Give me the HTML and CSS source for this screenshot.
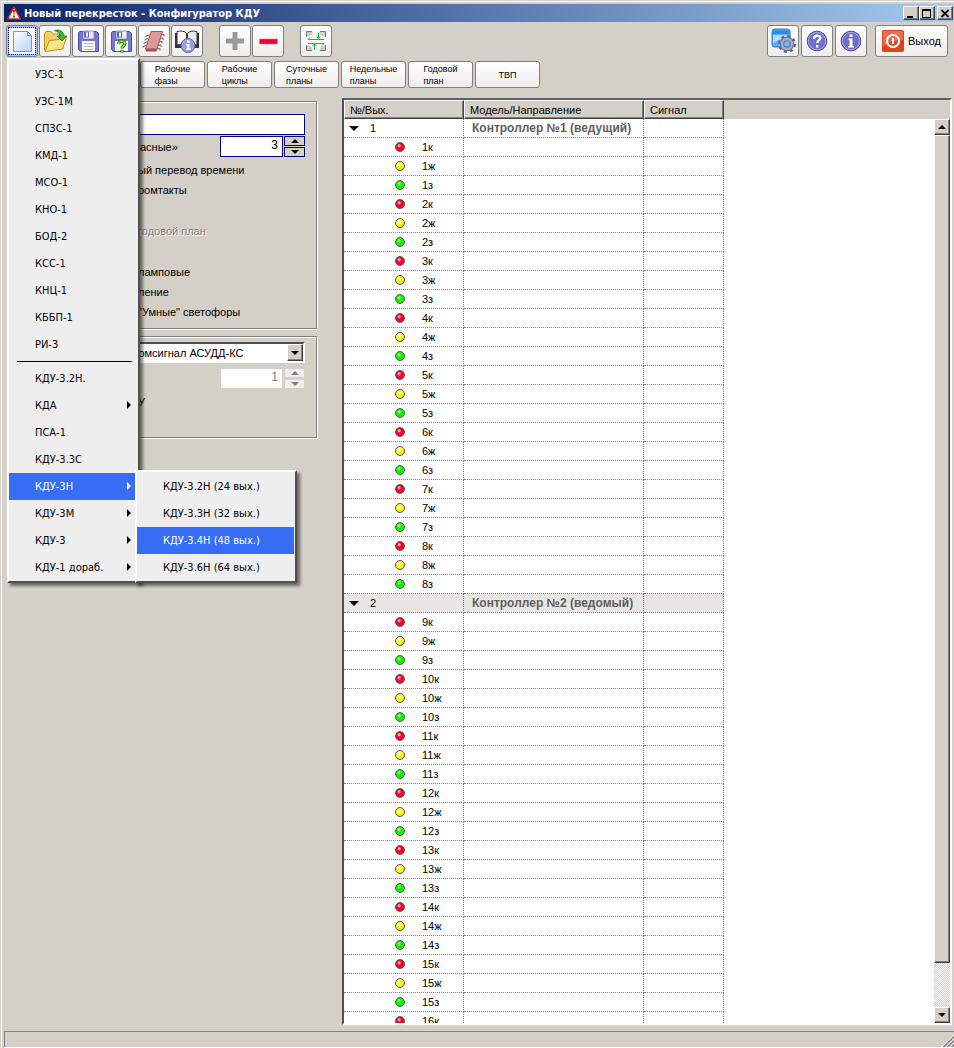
FILE: index.html
```html
<!DOCTYPE html>
<html lang="ru">
<head>
    <meta charset="UTF-8">
    <meta name="viewport" content="width=device-width, initial-scale=1.0">
    <title>Новый перекресток - Конфигуратор КДУ</title>
    <link rel="stylesheet" href="styles.css">
</head>
<body>
<div class="window">

    <header class="titlebar">
        <svg class="app-icon" width="14" height="14" viewBox="0 0 14 14">
            <path d="M7 1L13.300 13H.7z" fill="#fff" stroke="#e02020" stroke-width="1.500" stroke-linejoin="round"/>
            <rect x="6" y="4" width="2" height="2.500" fill="#e02020"/>
            <rect x="6" y="7" width="2" height="2" fill="#d8b000"/>
            <rect x="6" y="9.500" width="2" height="2" fill="#109020"/>
        </svg>
        <h1>Новый перекресток - Конфигуратор КДУ</h1>
        <div class="caption-buttons">
            <button class="caption" aria-label="Свернуть"><svg width="10" height="9"><path d="M1 7h6v2H1z"/></svg></button>
            <button class="caption" aria-label="Развернуть"><svg width="10" height="9"><path d="M0 0h9v9H0zM1 2v6h7V2z" fill-rule="evenodd"/></svg></button>
            <button class="caption close" aria-label="Закрыть"><svg width="10" height="9"><path d="M1.500 1l7 7M8.500 1l-7 7" stroke="#000" stroke-width="1.800"/></svg></button>
        </div>
    </header>

    <div class="toolbar">
        <div class="tools">
            <div class="dropdown">
                <button class="tool active" aria-label="Новый">
                    <svg width="26" height="26" viewBox="0 0 26 26">
                        <defs><linearGradient id="page" x2="1" y2="1"><stop offset="0" stop-color="#fff"/><stop offset="1" stop-color="#b4d4fa"/></linearGradient></defs>
                        <path d="M4.500 3.500h14l4 4v16h-18z" fill="url(#page)" stroke="#7c93c4"/>
                        <path d="M18.500 3.500v4h4z" fill="#eef5ff" stroke="#7c93c4"/>
                    </svg>
                </button>
                <ul class="menu">
                    <li>УЗС-1</li>
                    <li>УЗС-1М</li>
                    <li>СПЗС-1</li>
                    <li>КМД-1</li>
                    <li>МСО-1</li>
                    <li>КНО-1</li>
                    <li>БОД-2</li>
                    <li>КСС-1</li>
                    <li>КНЦ-1</li>
                    <li>КББП-1</li>
                    <li>РИ-3</li>
                    <li class="separator"></li>
                    <li>КДУ-3.2Н.</li>
                    <li class="parent">КДА</li>
                    <li>ПСА-1</li>
                    <li>КДУ-3.3С</li>
                    <li class="parent selected">КДУ-3Н
                        <ul class="menu submenu">
                            <li>КДУ-3.2Н (24 вых.)</li>
                            <li>КДУ-3.3Н (32 вых.)</li>
                            <li class="selected">КДУ-3.4Н (48 вых.)</li>
                            <li>КДУ-3.6Н (64 вых.)</li>
                        </ul>
                    </li>
                    <li class="parent">КДУ-3М</li>
                    <li class="parent">КДУ-3</li>
                    <li class="parent">КДУ-1 дораб.</li>
                </ul>
            </div>
            <button class="tool" aria-label="Открыть">
                <svg width="26" height="26" viewBox="0 0 26 26">
                    <path d="M2.500 22V5.500l1.500-2h5l2 2.500h6.500V11" fill="#f2cf62" stroke="#b98a1c"/>
                    <path d="M3 23.500l4.500-11 9-1 1.500-2h6.500l-4 11.500z" fill="#ffe387" stroke="#b98a1c" stroke-linejoin="round"/>
                    <path d="M12.500 2.500c5-1.500 9 .5 9.500 5.500h2.800L20 13l-4.800-5h3c-.5-3-2.500-4.500-5.700-5.500z" fill="#3fb53a" stroke="#187418" stroke-width=".8"/>
                </svg>
            </button>
            <button class="tool" aria-label="Сохранить">
                <svg width="26" height="26" viewBox="0 0 26 26">
                    <path d="M4.500 3.500h17l2 2v18h-18l-2-2v-17z" fill="#7779cf" stroke="#4d4e9c"/>
                    <path d="M8 3h11v8H8z" fill="#ececf6" stroke="#5b5ca8" stroke-width=".6"/>
                    <path d="M9 3.500h5v6H9z" fill="#6264b8"/><path d="M11 4.500h2v4h-2z" fill="#fff"/>
                    <path d="M7 13h13v10H7z" fill="#fafafa"/>
                    <path d="M9 15.500h9M9 18.500h9M9 21.500h9" stroke="#b9b9c4"/>
                </svg>
            </button>
            <button class="tool" aria-label="Сохранить как">
                <svg width="26" height="26" viewBox="0 0 26 26">
                    <path d="M4.500 3.500h17l2 2v18h-18l-2-2v-17z" fill="#7779cf" stroke="#4d4e9c"/>
                    <path d="M8 3h11v8H8z" fill="#ececf6" stroke="#5b5ca8" stroke-width=".6"/>
                    <path d="M9 3.500h5v6H9z" fill="#6264b8"/><path d="M11 4.500h2v4h-2z" fill="#fff"/>
                    <path d="M7 13h13v10H7z" fill="#fafafa"/>
                    <path d="M10.500 16c.5-4 6.500-3.500 6.300 0-.1 2-2.800 2.200-2.800 4.500M14 22v2.500" fill="none" stroke="#1d6b10" stroke-width="3.200"/>
                    <path d="M10.500 16c.5-4 6.500-3.500 6.300 0-.1 2-2.800 2.200-2.800 4M14 22.500v1.500" fill="none" stroke="#7be03c" stroke-width="1.800"/>
                </svg>
            </button>
            <button class="tool" aria-label="Прошивка">
                <svg width="26" height="26" viewBox="0 0 26 26">
                    <path d="M8 7l-3 1v1M7 10.500l-3 1v1M6 14l-3 1v1M5 17.500l-3 1v1M20 7l3-.5v2M19 10.500l3-.5v2M18 14l3-.5v2M17 17.500l3-.5v2M16 21l3-.5v2" fill="none" stroke="#666"/>
                    <path d="M10 3.500h11.500L16 21H4.500z" fill="#dd9898" stroke="#a55555"/>
                    <path d="M4.500 21H16l-.5 2.500H5z" fill="#aa4c4c"/>
                </svg>
            </button>
            <button class="tool" aria-label="Справочник">
                <svg width="26" height="26" viewBox="0 0 26 26">
                    <path d="M1 5h24v15H1z" fill="#30343c"/>
                    <path d="M3 3.500q7-1.500 9.500 2v13q-3-3-9.500-1.500z" fill="#fff" stroke="#333"/>
                    <path d="M23 3.500q-7-1.500-9.500 2v13q3-3 9.500-1.500z" fill="#e8e8e8" stroke="#333"/>
                    <circle cx="14" cy="17.500" r="7" fill="#9c9fe0" stroke="#5f62b0"/>
                    <path d="M13 12.500h2.500v2H13zM12 16h3.500v4.500H17V22h-5v-1.500h1.300v-3H12z" fill="#fff"/>
                </svg>
            </button>
        </div>
        <div class="tools">
            <button class="tool" aria-label="Добавить"><svg width="26" height="26" viewBox="0 0 26 26"><path d="M10.500 4h5v6.500H22v5h-6.500V22h-5v-6.500H4v-5h6.500z" fill="#9a9a9a"/></svg></button>
            <button class="tool" aria-label="Удалить"><svg width="26" height="26" viewBox="0 0 26 26"><path d="M4.500 11h18v5h-18z" fill="#f50030" stroke="#ff7088" stroke-width=".5"/></svg></button>
        </div>
        <div class="tools">
            <button class="tool" aria-label="Перекресток">
                <svg width="26" height="26" viewBox="0 0 26 26">
                    <path d="M3.500 3.500h6q0 5-6 5zM22.500 3.500h-6q0 5 6 5zM3.500 22.500h6q0-5-6-5zM22.500 22.500h-6q0-5 6-5z" fill="#ccc"/>
                    <path d="M9 3.500H3.500V9M17 3.500h5.500V9M9 22.500H3.500V17M17 22.500h5.500V17" fill="none" stroke="#777"/>
                    <path d="M5 11.500h16M7 9.500l-2 2M5 15.500h16M19 17.500l2-2M15.500 4.500v6M13.500 8.500l2 2 2-2M11.500 22v-6M9.500 18l2-2 2 2" fill="none" stroke="#10c040"/>
                </svg>
            </button>
        </div>
        <div class="tools right">
            <button class="tool" aria-label="Настройки">
                <svg width="26" height="26" viewBox="0 0 26 26">
                    <rect x="2" y="1" width="18" height="18" rx="2.500" fill="#58aefa" stroke="#237bd5"/>
                    <path d="M2.500 2.500h17V6h-17z" fill="#2c88ee"/><path d="M3 7h16v3q-8 0-16 5z" fill="#b2dcff"/>
                    <circle cx="17" cy="16" r="7.500" fill="none" stroke="#5c6484" stroke-width="3" stroke-dasharray="2.950"/>
                    <circle cx="17" cy="16" r="5" fill="none" stroke="#6a7294" stroke-width="4.500"/>
                    <circle cx="17" cy="16" r="5" fill="none" stroke="#a3accb" stroke-width="2.500"/>
                    <circle cx="17" cy="16" r="2.500" fill="#78b9f4"/>
                </svg>
            </button>
            <button class="tool" aria-label="Помощь">
                <svg width="26" height="26" viewBox="0 0 26 26">
                    <circle cx="13" cy="13" r="9.800" fill="#6f70c8" stroke="#44458f"/>
                    <circle cx="13" cy="13" r="8.700" fill="none" stroke="#a9aaea"/>
                    <path d="M10 11c0-4.500 6.500-4 6.300-.8-.1 2.200-3.100 2.200-3.100 4.800M13.200 17v2.500" fill="none" stroke="#fff" stroke-width="2.400"/>
                </svg>
            </button>
            <button class="tool" aria-label="О программе">
                <svg width="26" height="26" viewBox="0 0 26 26">
                    <circle cx="13" cy="13" r="9.800" fill="#6f70c8" stroke="#44458f"/>
                    <circle cx="13" cy="13" r="8.700" fill="none" stroke="#a9aaea"/>
                    <path d="M11.500 6.500h3V9h-3zM10.500 10.500h4V18H16v1.500h-6V18h1.500v-6h-1z" fill="#fff"/>
                </svg>
            </button>
            <button class="tool exit">
                <svg width="22" height="22" viewBox="0 0 22 22">
                    <rect width="22" height="22" rx="1.500" fill="#dc4422"/>
                    <path d="M1 1h20v9Q10 10 1 16z" fill="#e8704e"/>
                    <circle cx="11" cy="11" r="6" fill="none" stroke="#fff" stroke-width="2"/>
                    <path d="M10 8h2v6h-2z" fill="#fff"/>
                </svg>
                <span>Выход</span>
            </button>
        </div>
    </div>

    <nav class="tabs">
        <button class="tab"><span>Рабочие<br>фазы</span></button>
        <button class="tab"><span>Рабочие<br>циклы</span></button>
        <button class="tab"><span>Суточные<br>планы</span></button>
        <button class="tab"><span>Недельные<br>планы</span></button>
        <button class="tab"><span>Годовой<br>план</span></button>
        <button class="tab"><span>ТВП</span></button>
    </nav>

    <main class="content">
        <div class="settings">
            <fieldset class="group">
                <input class="name" type="text" aria-label="Название">
                <div class="field-row">
                    <label for="red-time">асные»</label>
                    <input class="number" id="red-time" type="text" value="3">
                    <div class="spinner">
                        <button aria-label="Больше"><svg width="8" height="4"><path d="M4 0l4 4H0z"/></svg></button>
                        <button aria-label="Меньше"><svg width="8" height="4"><path d="M0 0h8L4 4z"/></svg></button>
                    </div>
                </div>
                <div class="checks">
                    <label><input type="checkbox">ый перевод времени</label>
                    <label><input type="checkbox">ромтакты</label>
                    <label class="disabled gap"><input type="checkbox" disabled>годовой план</label>
                    <label class="gap"><input type="checkbox">ламповые</label>
                    <label><input type="checkbox">ление</label>
                    <label><input type="checkbox">"Умные" светофоры</label>
                </div>
            </fieldset>
            <fieldset class="group link">
                <div class="combo">
                    <select aria-label="Протокол"><option>Комсигнал АСУДД-КС</option></select>
                    <span class="combo-arrow"><svg width="8" height="4"><path d="M0 0h8L4 4z"/></svg></span>
                </div>
                <div class="field-row off">
                    <input class="number" type="text" value="1" aria-label="Номер" disabled>
                    <div class="spinner">
                        <button aria-label="Больше" disabled><svg width="8" height="4"><path d="M4 0l4 4H0z"/></svg></button>
                        <button aria-label="Меньше" disabled><svg width="8" height="4"><path d="M0 0h8L4 4z"/></svg></button>
                    </div>
                </div>
                <div class="checks">
                    <label><input type="checkbox">У</label>
                </div>
            </fieldset>
        </div>

        <section class="outputs">
            <table>
                <colgroup><col class="col-number"><col class="col-model"><col class="col-signal"><col></colgroup>
                <thead>
                    <tr><th>№/Вых.</th><th>Модель/Направление</th><th>Сигнал</th><td></td></tr>
                </thead>
                <tbody id="rows"></tbody>
            </table>
            <div class="scrollbar">
                <button class="scroll-btn" aria-label="Вверх"><svg width="8" height="4"><path d="M4 0l4 4H0z"/></svg></button>
                <div class="track"><div class="thumb"></div></div>
                <button class="scroll-btn" aria-label="Вниз"><svg width="8" height="4"><path d="M0 0h8L4 4z"/></svg></button>
            </div>
        </section>
    </main>

    <footer class="statusbar">
        <svg width="12" height="12"><path d="M0 12L12 0M4 12l8-8M8 12l4-4" stroke="#fff"/><path d="M1.500 12L12 1.500M5.500 12L12 5.500M9.500 12L12 9.500" stroke="#808080" stroke-width="1.500"/></svg>
    </footer>
</div>

<script>
    const rows = document.getElementById("rows");
    const controllers = [
        { number: 1, name: "Контроллер №1 (ведущий)", first: 1, count: 24 },
        { number: 2, name: "Контроллер №2 (ведомый)", first: 9, count: 22 }
    ];
    const lamps = [["red", "к"], ["yellow", "ж"], ["green", "з"]];

    function addRow(className, first, second) {
        const row = document.createElement("tr");
        row.className = className;
        row.innerHTML = `<td>${first}</td><td>${second}</td><td></td><td></td>`;
        rows.appendChild(row);
    }

    controllers.forEach(controller => {
        const arrow = '<svg class="expand" width="10" height="5"><path d="M0 0h10L5 5z"/></svg>';
        addRow("controller", arrow + controller.number, controller.name);
        for (let i = 0; i < controller.count; i++) {
            const [color, letter] = lamps[i % 3];
            const number = controller.first + Math.floor(i / 3);
            addRow("output", `<i class="lamp ${color}"></i>${number}${letter}`, "");
        }
    });
</script>
</body>
</html>
```
FILE: styles.css
```css
* {
    box-sizing: border-box;
}

body {
    margin: 0;
    font-family: "Liberation Sans", Arial, sans-serif;
    font-size: 11px;
    color: #000;
}

button, input, select {
    font: inherit;
    color: inherit;
    margin: 0;
    padding: 0;
}

svg {
    display: block;
    flex: none;
}

.window {
    height: 100vh;
    display: flex;
    flex-direction: column;
    padding: 3px 0 0 3px;
    background: #d4d0c8;
    border: 1px solid #d4d0c8;
    border-width: 1px 0 0 1px;
    box-shadow: inset 1px 1px #fff;
    overflow: hidden;
}

/* title */
.titlebar {
    display: flex;
    align-items: center;
    flex: none;
    height: 18px;
    padding: 0 1px 0 3px;
    background: linear-gradient(to right, #0a246a, #a6caf0);
}

.titlebar h1 {
    margin: 0 0 0 3px;
    font-family: "DejaVu Sans Condensed", Tahoma, sans-serif;
    font-size: 11px;
    font-weight: bold;
    color: #fff;
}

.caption-buttons {
    display: flex;
    margin-left: auto;
}

.caption {
    width: 16px;
    height: 14px;
    padding: 1px 0 0 2px;
    background: #d4d0c8;
    border: 1px solid;
    border-color: #fff #404040 #404040 #fff;
    box-shadow: inset -1px -1px #808080;
}

.caption.close {
    margin-left: 2px;
}

/* toolbar */
.toolbar {
    display: flex;
    flex: none;
    gap: 16px;
    padding: 3px 6px 4px 2px;
}

.tools {
    display: flex;
    gap: 1px;
}

.tools.right {
    margin-left: auto;
    gap: 2px;
}

.tool, .tab {
    display: flex;
    align-items: center;
    justify-content: center;
    background: linear-gradient(#fff, #f0eeec);
    border: 1px solid #808080;
    border-radius: 3px;
}

.tool {
    width: 32px;
    height: 32px;
}

.tool.active {
    background: #a9c4f5;
    border-color: #5f7fc0;
}

.tool.active svg {
    background: #fff;
    outline: 1px dotted #000;
}

.tool.exit {
    width: 73px;
    margin-left: 6px;
    gap: 4px;
}

.tabs {
    display: flex;
    flex: none;
    gap: 2px;
    padding-left: 136px;
}

.tab {
    width: 65px;
    height: 27px;
    font-size: 9px;
    line-height: 12px;
    text-align: left;
}

/* menus */
.dropdown {
    position: relative;
}

.menu {
    position: absolute;
    z-index: 2;
    left: 1px;
    top: 33px;
    width: 133px;
    margin: 0;
    padding: 1px 0 0;
    list-style: none;
    font-family: "DejaVu Sans Condensed", Tahoma, sans-serif;
    font-size: 11px;
    line-height: 27px;
    white-space: nowrap;
    color: #000;
    background: #eee;
    border: 2px solid;
    border-color: #fff #505050 #505050 #fff;
    box-shadow: 3px 3px 3px rgba(0, 0, 0, 0.5);
}

.menu li {
    position: relative;
    height: 27px;
    padding-left: 26px;
}

.menu .selected {
    color: #fff;
    background: #386ef5;
}

.menu .separator {
    height: 7px;
    margin: 0 6px 0 8px;
    padding: 3px 0;
    background: #000 content-box;
}

.parent::before {
    content: "";
    position: absolute;
    right: 7px;
    top: 9px;
    border: 4px solid transparent;
    border-left-color: currentColor;
    border-right-width: 0;
}

.submenu {
    left: 126px;
    top: -3px;
    width: 162px;
    padding-right: 1px;
}

/* settings */
.content {
    display: flex;
    flex: 1;
    min-height: 0;
    padding: 10px 2px 6px 4px;
}

.settings {
    flex: none;
    width: 334px;
    padding: 3px 25px 0 0;
}

.group {
    min-width: 0;
    height: 228px;
    margin: 0 0 7px;
    padding: 12px 11px 0 112px;
    border: 1px solid #808080;
    box-shadow: 1px 1px #fff, inset 1px 1px #fff;
}

.group.link {
    height: 102px;
    padding-top: 5px;
}

.name, .number {
    display: block;
    height: 21px;
    border: 1px solid #000080;
    background: #fff;
}

.name {
    width: 100%;
    margin-bottom: 1px;
}

.number {
    width: 63px;
    margin-left: auto;
    padding: 0 4px 3px 0;
    text-align: right;
    font-size: 12px;
}

.field-row {
    display: flex;
    align-items: center;
}

.field-row label {
    padding-left: 19px;
}

.spinner {
    display: grid;
    gap: 1px;
    margin-left: 1px;
}

.spinner button {
    display: flex;
    align-items: center;
    justify-content: center;
    width: 21px;
    height: 10px;
    background: #d4d0c8;
    border: 1px solid #000080;
}

.checks {
    padding-top: 3px;
}

.checks label {
    display: flex;
    align-items: center;
    height: 20px;
    white-space: nowrap;
}

.checks .gap {
    margin-top: 21px;
}

.checks input {
    width: 13px;
    height: 13px;
    margin-right: 4px;
}

.checks .disabled {
    color: #808080;
    text-shadow: 1px 1px #fff;
}

.combo {
    display: grid;
    height: 21px;
    margin-bottom: 5px;
}

.combo select, .combo-arrow {
    grid-area: 1 / 1;
}

.combo select {
    appearance: none;
    width: 100%;
    padding-left: 9px;
    background: #fff;
    border: 2px solid;
    border-color: #505050 #fff #fff #505050;
    border-radius: 0;
}

.combo-arrow, .scroll-btn {
    display: flex;
    align-items: center;
    justify-content: center;
    width: 16px;
    height: 17px;
    background: #d4d0c8;
    border: 1px solid;
    border-color: #fff #404040 #404040 #fff;
    box-shadow: inset -1px -1px #808080;
}

.combo-arrow {
    justify-self: end;
    align-self: center;
    margin-right: 2px;
    pointer-events: none;
}

.off .number {
    color: #808080;
    background: #fff;
    border-color: #d4d0c8;
}

.off .spinner button {
    background: #eee;
    border-color: #d4d0c8;
    fill: #808080;
}

/* outputs table */
.outputs {
    display: grid;
    grid-template: 19px minmax(0, 1fr) / minmax(0, 1fr) 16px;
    flex: 1;
    min-width: 0;
    background: #fff;
    border: 2px solid;
    border-color: #606060 #fff #fff #505050;
    overflow: hidden;
}

.outputs table {
    grid-area: 1 / 1 / 3 / 3;
    align-self: start;
    width: 100%;
    table-layout: fixed;
    border-collapse: separate;
    border-spacing: 0;
}

.col-number {
    width: 120px;
}

.col-model {
    width: 180px;
}

.col-signal {
    width: 80px;
}

.outputs th, .outputs td {
    height: 19px;
    padding: 0 0 0 6px;
    text-align: left;
    font-weight: normal;
    white-space: nowrap;
}

.outputs th {
    background: #d4d0c8;
    border: 1px solid;
    border-color: #fff #404040 #404040 #fff;
    box-shadow: inset -1px -1px #808080;
    padding-left: 5px;
}

.outputs thead td {
    background: #d4d0c8;
}

.outputs tbody td:not(:last-child) {
    border-right: 1px dotted #808080;
    border-bottom: 1px dotted #808080;
}

.controller:not(:first-child) td:not(:last-child) {
    background: #e8e6e2;
}

.outputs .controller td:nth-child(2) {
    padding-left: 8px;
    font-size: 12px;
    font-weight: bold;
    color: #606060;
}

.outputs .output td:first-child {
    padding-left: 51px;
}

.expand {
    display: inline-block;
    margin: 0 11px 2px -1px;
    vertical-align: middle;
}

.lamp {
    display: inline-block;
    width: 10px;
    height: 10px;
    margin-right: 17px;
    border: 1px solid #555;
    border-radius: 50%;
    vertical-align: -1px;
}

.red {
    background: radial-gradient(circle at 40% 35%, #ffb0b0 0 1px, #ff0020 2px 4px, #e000c0 6px);
}

.yellow {
    background: radial-gradient(circle at 40% 35%, #fff 0 1px, #ffff00 2px 4px, #60c020 7px);
}

.green {
    background: radial-gradient(circle at 40% 35%, #b0ff60 0 1px, #00f800 2px 4px, #c8a800 7px);
}

.scrollbar {
    grid-area: 2 / 2;
    display: flex;
    flex-direction: column;
    z-index: 1;
}

.scroll-btn {
    flex: none;
    height: 16px;
}

.track {
    flex: 1;
    background: repeating-conic-gradient(#fff 0 25%, #d4d0c8 0 50%) 0 0 / 2px 2px;
}

.thumb {
    height: 95%;
    background: #d4d0c8;
    border: 1px solid;
    border-color: #fff #404040 #404040 #fff;
    box-shadow: inset -1px -1px #808080;
}

.statusbar {
    display: flex;
    align-items: flex-end;
    justify-content: flex-end;
    flex: none;
    height: 16px;
    margin-bottom: 1px;
    border: 1px solid #808080;
    border-width: 1px 0 0 1px;
    box-shadow: 0 1px #fff;
}
```
